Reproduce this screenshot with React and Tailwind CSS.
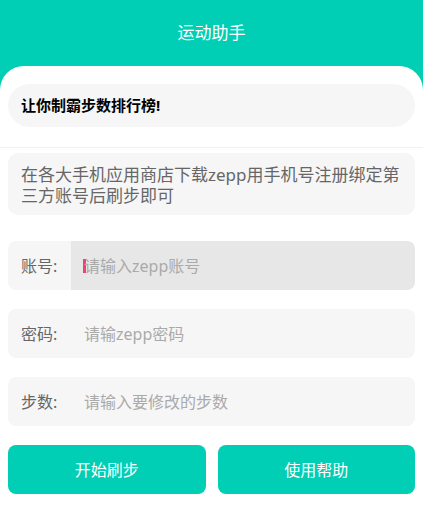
export default function App() {
  const font = { fontFamily: '"Noto Sans", "Noto Sans CJK SC", sans-serif' };
  return (
    <div className="min-h-screen w-full bg-[#00ceb5] flex flex-col" style={font}>
      <div className="h-[66px] flex items-center justify-center text-white text-[17px]">运动助手</div>
      <div className="flex-1 bg-white rounded-t-[24px] px-2 pt-[18px] flex flex-col">
        <div className="h-[43px] rounded-full bg-[#f6f6f6] flex items-center pl-[13px] text-[15px] font-bold text-black">让你制霸步数排行榜!</div>
        <div className="h-px bg-[#f1f1f1] -mx-2 mt-[20px]"></div>
        <div className="mt-[5px] rounded-[10px] bg-[#f6f6f6] px-[13px] pt-[11px] pb-[9px] text-[17px] leading-[21px] text-[#666]">
          在各大手机应用商店下载zepp用手机号注册绑定第三方账号后刷步即可
        </div>
        <div className="mt-[26px] h-[49px] rounded-[8px] bg-[#f6f6f6] flex overflow-hidden">
          <div className="w-[63px] pl-[13px] flex items-center text-[16px] text-[#666]">账号:</div>
          <div className="flex-1 bg-[#e7e7e7] flex items-center pl-[12px] text-[16px] text-[#aaa]">
            <span className="w-[3px] h-[14px] bg-[#f0407a] mr-[-2px]"></span>
            <span>请输入zepp账号</span>
          </div>
        </div>
        <div className="mt-[19px] h-[49px] rounded-[8px] bg-[#f6f6f6] flex">
          <div className="w-[63px] pl-[13px] flex items-center text-[16px] text-[#666]">密码:</div>
          <div className="flex-1 flex items-center pl-[13px] text-[16px] text-[#aaa]">请输zepp密码</div>
        </div>
        <div className="mt-[19px] h-[49px] rounded-[8px] bg-[#f6f6f6] flex">
          <div className="w-[63px] pl-[13px] flex items-center text-[16px] text-[#666]">步数:</div>
          <div className="flex-1 flex items-center pl-[13px] text-[16px] text-[#aaa]">请输入要修改的步数</div>
        </div>
        <div className="mt-[19px] flex gap-[12px]">
          <button className="flex-1 h-[49px] rounded-[8px] bg-[#00ceb5] text-white text-[16px]">开始刷步</button>
          <button className="flex-1 h-[49px] rounded-[8px] bg-[#00ceb5] text-white text-[16px]">使用帮助</button>
        </div>
      </div>
    </div>
  );
}
